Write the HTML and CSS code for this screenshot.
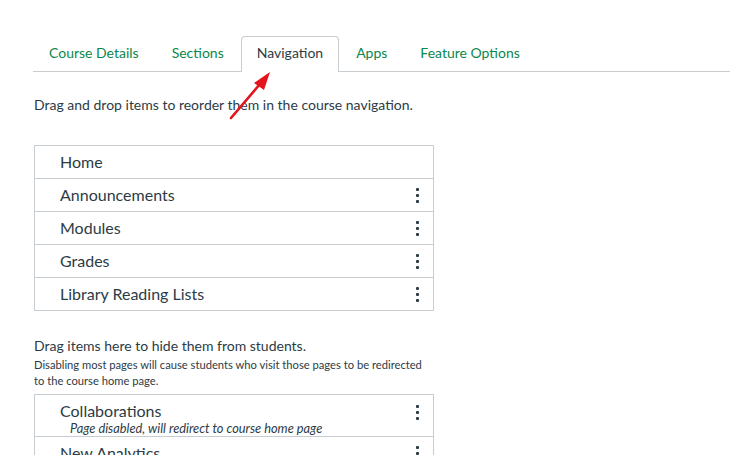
FILE: index.html
```html
<!DOCTYPE html>
<html>
<head>
<meta charset="utf-8">
<link rel="stylesheet" href="styles.css">
</head>
<body>
<div class="page">
  <nav class="tabs">
    <a class="tab">Course Details</a>
    <a class="tab">Sections</a>
    <a class="tab active">Navigation</a>
    <a class="tab">Apps</a>
    <a class="tab">Feature Options</a>
  </nav>
  <p class="intro">Drag and drop items to reorder them in the course navigation.</p>
  <ul class="navlist">
    <li class="item"><span class="label">Home</span></li>
    <li class="item"><span class="label">Announcements</span><span class="kebab"><i></i><i></i><i></i></span></li>
    <li class="item"><span class="label">Modules</span><span class="kebab"><i></i><i></i><i></i></span></li>
    <li class="item"><span class="label">Grades</span><span class="kebab"><i></i><i></i><i></i></span></li>
    <li class="item"><span class="label">Library Reading Lists</span><span class="kebab"><i></i><i></i><i></i></span></li>
  </ul>
  <p class="hide-title">Drag items here to hide them from students.</p>
  <p class="hide-note">Disabling most pages will cause students who visit those pages to be redirected to the course home page.</p>
  <ul class="navlist hidden-list">
    <li class="item disabled"><div class="stack"><span class="label">Collaborations</span><span class="sub">Page disabled, will redirect to course home page</span></div><span class="kebab"><i></i><i></i><i></i></span></li>
    <li class="item"><span class="label">New Analytics</span><span class="kebab"><i></i><i></i><i></i></span></li>
  </ul>
  <svg class="arrow" width="60" height="60" viewBox="0 0 60 60">
    <line x1="4" y1="50" x2="33" y2="16" stroke="#e3141b" stroke-width="2.6" stroke-linecap="round"/>
    <polygon points="43,4 27,15 37,22" fill="#e3141b"/>
  </svg>
</div>
</body>
</html>
```

FILE: styles.css
```css
* { box-sizing: border-box; }
html, body { margin: 0; padding: 0; background: #fff; }
body {
  font-family: Lato, "Open Sans", sans-serif;
  color: #2d3b45;
  overflow: hidden;
}
.page {
  position: relative;
  padding: 36px 0 0 34px;
  width: 730px;
  height: 455px;
}
.tabs {
  display: flex;
  margin-left: -1px;
  border-bottom: 1px solid #c7cdd1;
  height: 36px;
}
.tab {
  display: block;
  padding: 0 15px;
  height: 36px;
  line-height: 31px;
  font-size: 14px;
  color: #0b874b;
  border: 1px solid transparent;
  border-bottom: none;
  border-radius: 4px 4px 0 0;
  margin-right: 1px;
}
.tab.active {
  color: #2d3b45;
  border-color: #c7cdd1;
  background: #fff;
  margin-bottom: -1px;
}
.intro {
  margin: 24px 0 0 0;
  font-size: 14px;
  line-height: 18px;
}
.navlist {
  list-style: none;
  margin: 31px 0 0 0;
  padding: 0;
  width: 400px;
  border: 1px solid #c7cdd1;
}
.item {
  display: flex;
  align-items: center;
  justify-content: space-between;
  height: 33px;
  padding: 0 14px 0 25px;
  font-size: 16px;
  border-top: 1px solid #c7cdd1;
}
.item:first-child { border-top: none; height: 32px; }
.label { line-height: 20px; }
.kebab {
  display: flex;
  flex-direction: column;
  gap: 3px;
  width: 3px;
}
.kebab i {
  display: block;
  width: 3px;
  height: 3px;
  background: #2d3b45;
  border-radius: 1px;
}
.hide-title {
  margin: 26px 0 0 0;
  font-size: 14px;
  line-height: 18px;
}
.hide-note {
  margin: 2px 0 0 0;
  font-size: 11.2px;
  line-height: 16px;
  width: 396px;
}
.hidden-list { margin-top: 5px; }
.item.disabled {
  height: 41px;
  align-items: flex-start;
  padding-top: 6px;
}
.item.disabled .kebab { margin-top: 4px; }
.stack { display: flex; flex-direction: column; }
.sub {
  font-size: 12.8px;
  font-style: italic;
  line-height: 14px;
  margin-left: 10px;
}
.arrow {
  position: absolute;
  left: 227px;
  top: 68px;
}
```
